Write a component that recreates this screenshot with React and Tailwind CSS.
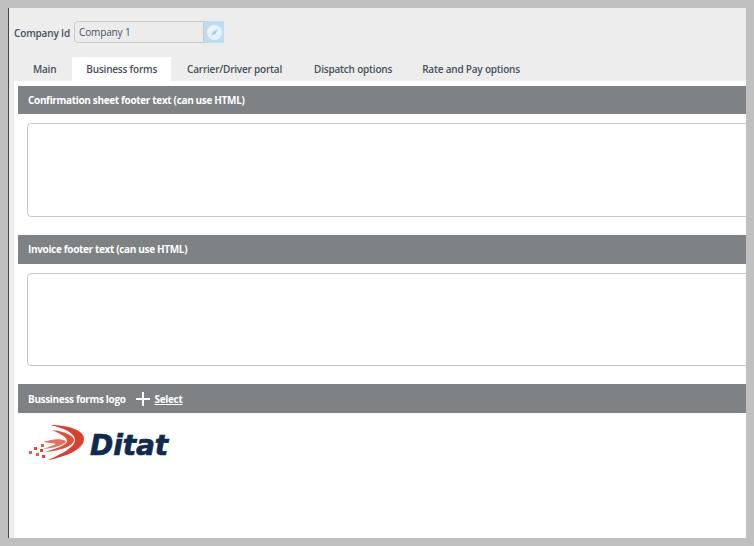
const tabs = [
    { label: "Main", className: "pr-[16px] pl-[15px]" },
    { label: "Business forms", className: "mr-[1px] bg-white px-[14px]" },
    { label: "Carrier/Driver portal", className: "pr-[17px] pl-[15px]" },
    { label: "Dispatch options", className: "px-[15px]" },
    { label: "Rate and Pay options", className: "px-[15px]" },
];

function Section({ title, barClass, boxClass }) {
    return (
        <div className="pb-[18px]">
            <div className={`flex items-center bg-[#7e8285] pl-[10px] text-[10px] font-bold tracking-[-0.34px] text-white ${barClass}`}>
                {title}
            </div>
            <div className="pt-[9px] pl-[9px]">
                <div className={`-mr-2 rounded-[4px] border border-[#c8c8c8] bg-white ${boxClass}`}></div>
            </div>
        </div>
    );
}

function Logo() {
    return (
        <div className="flex h-[36px] items-center pl-[10px]">
            <svg width="62" height="36" viewBox="0 0 62 36">
                <path d="M22 0 C40 0 56 5 56 14 C56 24 38 32 20 35 C34 29 47 22 47 15 C47 8 36 3 22 0 Z" fill="#d9402f" />
                <path d="M24 5 C34 6 46 10 46 15 C46 21 32 26 17 27 C27 24 39 20 39 16 C39 12 31 8 24 5 Z" fill="#e04f3b" />
                <path d="M15 17 C24 14 33 13 38 16 C37 20 26 23 15 24 C20 22 25 21 28 19 C25 18 20 18 15 17 Z" fill="#e76f5c" />
                <rect x="1" y="26" width="3" height="3" fill="#e0604f" />
                <rect x="6" y="22" width="3" height="3" fill="#dc4437" />
                <rect x="8" y="28" width="3" height="3" fill="#e0604f" />
                <rect x="12" y="24" width="3" height="3" fill="#dc4437" />
                <rect x="13" y="19" width="3" height="3" fill="#e0604f" />
                <rect x="14" y="30" width="3" height="3" fill="#dc4437" />
            </svg>
            <span className="mt-[5px] font-['DejaVu_Sans',sans-serif] text-[28px] leading-none font-bold tracking-[-0.1px] text-[#10294f] italic [-webkit-text-stroke:0.7px_#10294f]">
                Ditat
            </span>
        </div>
    );
}

export default function App() {
    return (
        <div className="h-[546px] w-[754px] overflow-hidden bg-[#c0c0c0] p-2 font-['Open_Sans',sans-serif]">
            <div className="flex h-[530px] flex-col overflow-hidden border-l border-[#444444] bg-[#ededed]">
                <div className="flex items-center pt-[13px] pl-[5px] text-[#46505a]">
                    <span className="mt-[2px] mr-[4px] text-[10px] font-semibold tracking-[-0.15px]">Company Id</span>
                    <div className="flex h-[22px] w-[130px] items-center rounded-l-[4px] border border-[#c8c8c8] bg-[#ececec] pt-[1px] pl-[4px] text-[10px] tracking-[-0.15px]">
                        Company 1
                    </div>
                    <div className="flex h-[22px] w-[20px] items-center justify-center bg-[#bfdcf5]">
                        <svg width="15" height="15" viewBox="0 0 15 15">
                            <circle cx="7.5" cy="7.5" r="7.5" fill="#eaf3fb" />
                            <path d="M11 4 L8.8 8.8 L4 11 L6.2 6.2 Z" fill="#a8cff0" />
                        </svg>
                    </div>
                </div>

                <div className="mt-[14px] flex h-[24px] pl-[9px] text-[10px] font-semibold tracking-[-0.2px] text-[#46505a]">
                    {tabs.map((tab) => (
                        <div key={tab.label} className={`flex items-center pt-[1px] ${tab.className}`}>
                            {tab.label}
                        </div>
                    ))}
                </div>

                <div className="ml-[5px] flex-1 overflow-hidden bg-white pt-[5px] pl-[4px]">
                    <Section title="Confirmation sheet footer text (can use HTML)" barClass="h-[28px]" boxClass="h-[94px]" />
                    <Section title="Invoice footer text (can use HTML)" barClass="h-[29px]" boxClass="h-[93px]" />
                    <div className="flex h-[29px] items-center bg-[#7e8285] pt-[1px] pl-[10px] text-[10px] font-bold tracking-[-0.34px] text-white">
                        <span>Bussiness forms logo</span>
                        <svg width="14" height="14" viewBox="0 0 14 14" className="mr-[5px] ml-[10px]">
                            <path d="M7 0V14M0 7H14" stroke="white" strokeWidth="2" />
                        </svg>
                        <span className="underline">Select</span>
                    </div>
                    <div className="pt-[12px]">
                        <Logo />
                    </div>
                </div>
            </div>
        </div>
    );
}
